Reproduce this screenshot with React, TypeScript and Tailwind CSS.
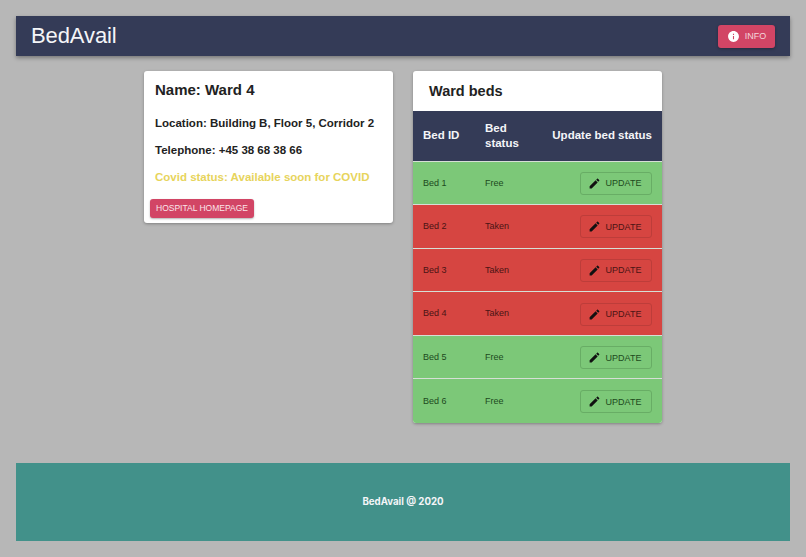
const beds = [
  { id: "Bed 1", status: "Free" },
  { id: "Bed 2", status: "Taken" },
  { id: "Bed 3", status: "Taken" },
  { id: "Bed 4", status: "Taken" },
  { id: "Bed 5", status: "Free" },
  { id: "Bed 6", status: "Free" },
];

const PencilIcon = () => (
  <svg viewBox="0 0 24 24" className="w-[13px] h-[13px] fill-[#111]">
    <path d="M3 17.25V21h3.75L17.81 9.94l-3.75-3.75L3 17.25zM20.71 7.04c.39-.39.39-1.02 0-1.41l-2.34-2.34c-.39-.39-1.02-.39-1.41 0l-1.83 1.83 3.75 3.75 1.83-1.83z" />
  </svg>
);

const InfoIcon = () => (
  <svg viewBox="0 0 24 24" className="w-[13px] h-[13px] fill-white">
    <path d="M12 2C6.48 2 2 6.48 2 12s4.48 10 10 10 10-4.48 10-10S17.52 2 12 2zm1 15h-2v-6h2v6zm0-8h-2V7h2v2z" />
  </svg>
);

export default function App() {
  return (
    <div className="w-[806px] h-[557px] overflow-hidden bg-[#b7b7b7] pt-4 px-4 font-['Liberation_Sans',sans-serif]">
      <header className="h-10 bg-[#343b57] flex items-center justify-between pl-[15px] pr-[15px] shadow-[0_2px_4px_rgba(0,0,0,0.35)]">
        <span className="text-[#f4f5f8] text-[22px] leading-none tracking-[-0.1px]">BedAvail</span>
        <button className="h-[23px] w-[57px] bg-[#d24565] rounded-[3px] flex items-center justify-center gap-[5px] text-[#f4d5dc] text-[9px] leading-none shadow-[0_1px_3px_rgba(0,0,0,0.3)]">
          <InfoIcon />
          <span className="pt-px">INFO</span>
        </button>
      </header>

      <main className="flex items-start gap-5 mt-[15px] ml-[128px]">
        <section className="w-[249px] h-[152px] bg-white rounded-[3px] shadow-[0_1px_3px_rgba(0,0,0,0.3)] flex flex-col">
          <div className="pl-[11px] pt-[10px] flex flex-col text-[#222] font-bold">
            <h2 className="text-[15px] leading-[18px]">Name: Ward 4</h2>
            <p className="text-[11.5px] leading-[14px] mt-[17px]">Location: Building B, Floor 5, Corridor 2</p>
            <p className="text-[11.5px] leading-[14px] mt-[13px]">Telephone: +45 38 68 38 66</p>
            <p className="text-[11.5px] leading-[14px] mt-[13px] text-[#e7d45c]">Covid status: Available soon for COVID</p>
          </div>
          <button className="ml-[6px] mt-[15px] w-[104px] h-[19px] bg-[#d24565] rounded-[3px] text-[#fbe6ea] text-[8.5px] shadow-[0_1px_2px_rgba(0,0,0,0.3)]">
            HOSPITAL HOMEPAGE
          </button>
        </section>

        <section className="w-[249px] h-[352px] bg-white rounded-[3px] overflow-hidden shadow-[0_1px_3px_rgba(0,0,0,0.3)]">
          <h2 className="h-10 pl-4 pt-px flex items-center text-[14.5px] font-bold text-[#222]">Ward beds</h2>
          <table className="w-full border-collapse table-fixed">
            <thead>
              <tr className="h-[50px] bg-[#343b57] text-[#f4f5f8] text-[11.5px] leading-[15px] font-bold text-left">
                <th className="w-[62px] pl-[10px] font-bold">Bed ID</th>
                <th className="w-[50px] pl-[10px] font-bold">Bed status</th>
                <th className="pr-[10px] text-right font-bold whitespace-nowrap">Update bed status</th>
              </tr>
            </thead>
            <tbody>
              {beds.map((bed) => {
                const free = bed.status === "Free";
                return (
                  <tr
                    key={bed.id}
                    className={`h-[43.6px] border-t border-[#d6dfd6] text-[9px] ${free ? "bg-[#7cc878] text-[#1d4a1d]" : "bg-[#d64541] text-[#4a1414]"}`}
                  >
                    <td className="pl-[10px] pt-px">{bed.id}</td>
                    <td className="pl-[10px] pt-px">{bed.status}</td>
                    <td className="pr-[10px] pt-px">
                      <div className="flex justify-end">
                        <button
                          className={`w-[72px] h-[23px] pr-[3px] rounded-[3px] border flex items-center justify-center gap-[5px] text-[9px] leading-none ${free ? "border-[#68ad65] text-[#1d4a1d]" : "border-[#bd3d3a] text-[#4a1414]"}`}
                        >
                          <PencilIcon />
                          <span className="pt-px">UPDATE</span>
                        </button>
                      </div>
                    </td>
                  </tr>
                );
              })}
            </tbody>
          </table>
        </section>
      </main>

      <footer className="mt-10 h-[78px] bg-[#42918a] flex items-center justify-center text-[#f4f5f8] text-[9.7px] font-bold font-['Inter',sans-serif]">
        BedAvail @ 2020
      </footer>
    </div>
  );
}
